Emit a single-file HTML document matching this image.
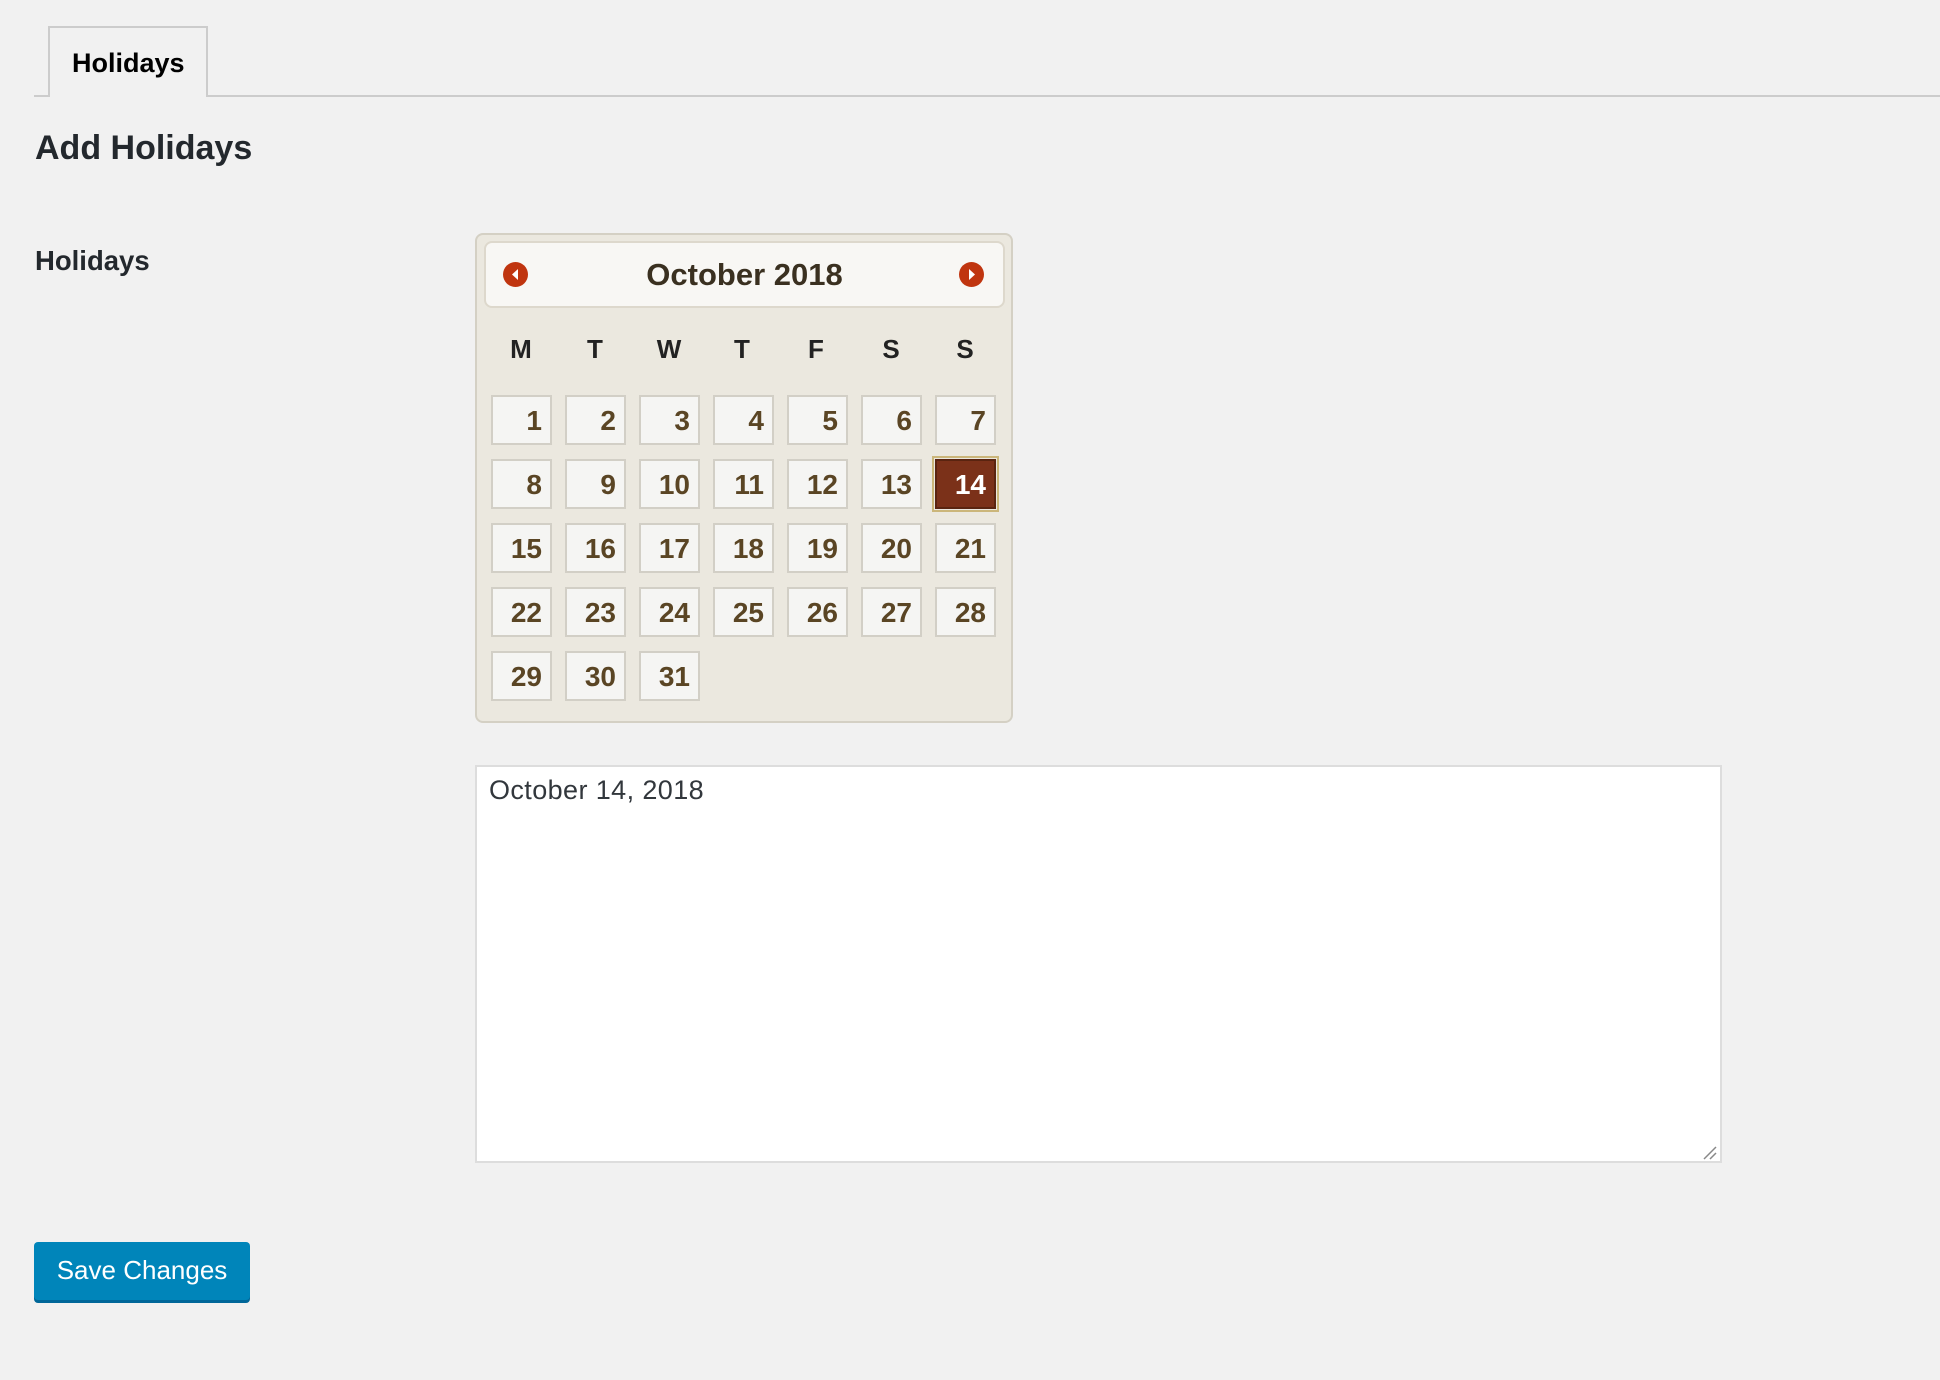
<!DOCTYPE html>
<html><head><meta charset="utf-8"><style>
body{margin:0;width:1940px;height:1380px;background:#f1f1f1;position:relative;overflow:hidden;font-family:"Liberation Sans",sans-serif;color:#23282d}
.abs{position:absolute}
.tab{left:48px;top:26px;width:160px;height:71px;border:2px solid #ccc;border-bottom:none;background:#f1f1f1;box-sizing:border-box;font-size:27px;font-weight:bold;line-height:71px;text-indent:22px;color:#000;z-index:2}
.line{left:34px;top:95px;width:1906px;height:2px;background:#ccc}
.cal{left:475px;top:233px;width:538px;height:490px;background:#ebe8df;border:2px solid #d4d0c4;border-radius:8px;box-sizing:border-box}
.hdr{left:484px;top:241px;width:521px;height:67px;background:#f8f7f4;border:2px solid #ddd8cc;border-radius:8px;box-sizing:border-box;text-align:center;font-size:31px;font-weight:bold;line-height:63px;color:#3a3020}
.arr{width:25px;height:25px;border-radius:50%;background:#c0350f;top:262px}
.dh{top:334px;width:60px;text-align:center;font-size:26px;font-weight:bold;color:#222}
.c{width:61px;height:50px;border:2px solid #d2cfc6;background:#f5f5f3;box-sizing:border-box;text-align:right;padding-right:8px;font-size:28px;font-weight:bold;line-height:48px;color:#5a4524}
.sel{background:#7b3119;color:#fff;outline:2px solid #cbb67a;outline-offset:1px;border-color:#5a2410}
.ta{left:475px;top:765px;width:1247px;height:398px;background:#fff;border:2px solid #ddd;box-sizing:border-box;font-size:27px;letter-spacing:0.4px;padding:8px 12px;color:#32373c}
.btn{left:34px;top:1242px;width:216px;height:58px;background:#0085ba;border-radius:4px;box-shadow:0 3px 0 #006799;color:#fff;font-size:26px;text-align:center;line-height:56px}
</style></head><body>
<div class="abs line"></div>
<div class="abs tab">Holidays</div>
<div class="abs" style="left:35px;top:129px;font-size:34px;font-weight:bold">Add Holidays</div>
<div class="abs" style="left:35px;top:245px;font-size:27.5px;font-weight:bold">Holidays</div>
<div class="abs cal"></div>
<div class="abs hdr">October 2018</div>
<div class="abs arr" style="left:503px"><svg width="25" height="25"><path d="M15 7 L9 12.5 L15 18Z" fill="#fff"/></svg></div>
<div class="abs arr" style="left:959px"><svg width="25" height="25"><path d="M10 7 L16 12.5 L10 18Z" fill="#fff"/></svg></div>
<div class="abs dh" style="left:491px">M</div>
<div class="abs dh" style="left:565px">T</div>
<div class="abs dh" style="left:639px">W</div>
<div class="abs dh" style="left:712px">T</div>
<div class="abs dh" style="left:786px">F</div>
<div class="abs dh" style="left:861px">S</div>
<div class="abs dh" style="left:935px">S</div>
<div id="g"></div>
<script>
var g=document.getElementById('g'),h='';
for(var d=1;d<=31;d++){var i=d-1,col=i%7,row=Math.floor(i/7);
h+='<div class="abs c'+(d==14?' sel':'')+'" style="left:'+(491+col*74)+'px;top:'+(395+row*64)+'px">'+d+'</div>';}
g.innerHTML=h;
</script>
<div class="abs ta">October 14, 2018</div>
<svg class="abs" style="left:1702px;top:1146px" width="16" height="14"><path d="M2 13 L14 1 M8 13 L14 7" stroke="#888" stroke-width="1.5"/></svg>
<div class="abs btn">Save Changes</div>
</body></html>
